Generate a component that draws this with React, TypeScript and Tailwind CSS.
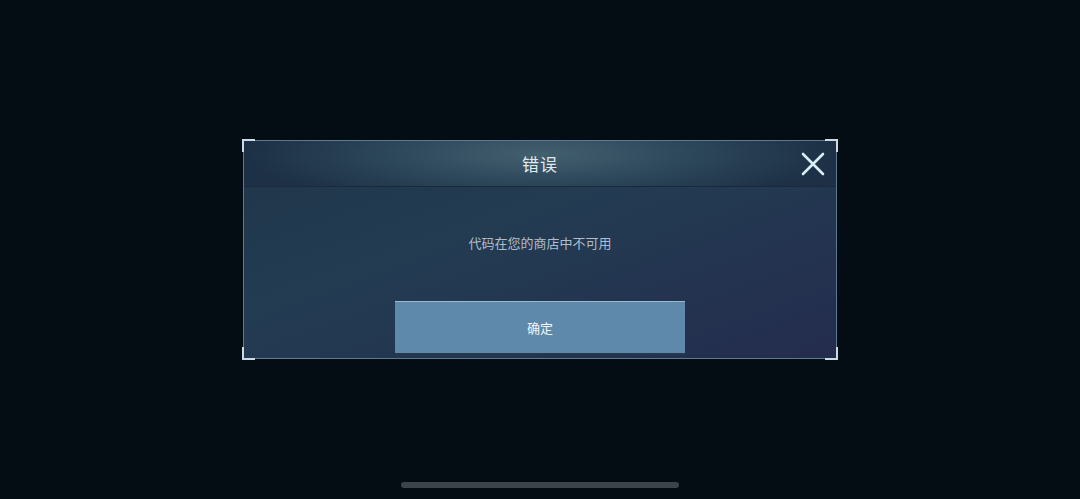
export default function App() {
  return (
    <div
      className="relative w-[1080px] h-[499px] bg-[#050d14] overflow-hidden flex flex-col items-center"
      style={{ fontFamily: '"Noto Sans CJK SC", "Noto Sans", sans-serif' }}
    >
      <div className="h-[140px]" />
      <div className="relative w-[594px] h-[219px] border border-[#5d7a92] bg-[linear-gradient(160deg,#1f3549_0%,#233c52_40%,#242c4e_100%)] flex flex-col">
        {/* corner brackets */}
        <div className="absolute -left-[2px] -top-[2px] w-[13px] h-[13px] border-l-2 border-t-2 border-[#c9dbe6]" />
        <div className="absolute -right-[2px] -top-[2px] w-[13px] h-[13px] border-r-2 border-t-2 border-[#c9dbe6]" />
        <div className="absolute -left-[2px] -bottom-[2px] w-[13px] h-[13px] border-l-2 border-b-2 border-[#c9dbe6]" />
        <div className="absolute -right-[2px] -bottom-[2px] w-[13px] h-[13px] border-r-2 border-b-2 border-[#c9dbe6]" />

        <div className="relative h-[46px] flex items-center justify-center bg-[radial-gradient(ellipse_50%_120%_at_50%_30%,#43606f_0%,#2f4a5d_45%,#1d3045_100%)] border-b border-[#1a2a3c]">
          <span className="text-[17px] text-[#e2eaf1] tracking-[1px]">错误</span>
          <svg
            className="absolute right-[11px] top-[11px]"
            width="24"
            height="24"
            viewBox="0 0 24 24"
          >
            <path d="M2 2 L22 22 M22 2 L2 22" stroke="#d6eef4" strokeWidth="2.6" strokeLinecap="round" />
          </svg>
        </div>

        <div className="flex-1 flex flex-col items-center">
          <div className="h-[46px]" />
          <span className="text-[13px] text-[#b0bdca] leading-[20px]">代码在您的商店中不可用</span>
          <div className="h-[48px]" />
          <button className="w-[290px] h-[54px] bg-[#5e89aa] border-t border-[#9bbad0] border-b-2 border-b-[#24384c] flex items-center justify-center text-[13px] text-[#f2f6f9]">
            确定
          </button>
        </div>
      </div>

      <div className="absolute left-[401px] top-[482px] w-[278px] h-[6px] rounded-full bg-[#3b444b]" />
    </div>
  );
}
